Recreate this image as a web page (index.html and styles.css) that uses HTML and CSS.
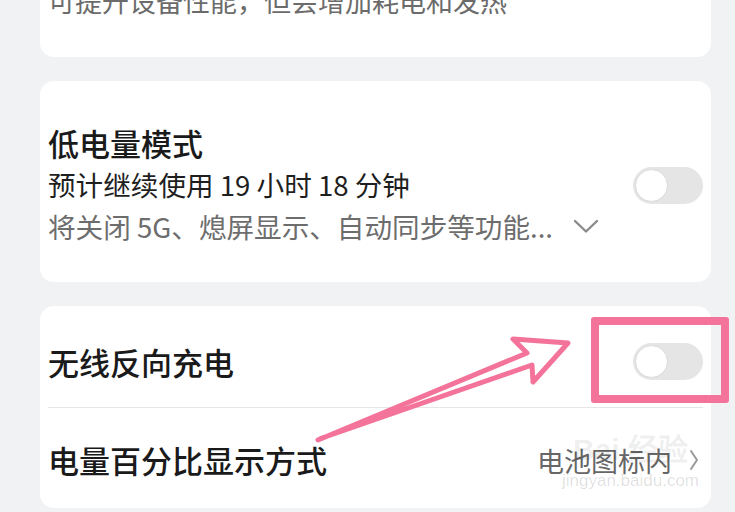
FILE: index.html
```html
<!DOCTYPE html>
<html lang="zh-CN">
<head>
  <meta charset="UTF-8">
  <title>电池</title>
  <link rel="stylesheet" href="styles.css">
</head>
<body>
  <div class="page">
    <div class="card card-top">
      <p class="desc">可提升设备性能，但会增加耗电和发热</p>
    </div>

    <div class="card card-mode">
      <div class="mode-text">
        <div class="title">低电量模式</div>
        <div class="sub">预计继续使用 19 小时 18 分钟</div>
        <div class="hint">
          将关闭 5G、熄屏显示、自动同步等功能...
          <svg class="chev-down" width="26" height="15" viewBox="0 0 26 15">
            <path d="M2 2 L13 12.5 L24 2" fill="none" stroke="#8a8a8a" stroke-width="2.4" stroke-linecap="round" stroke-linejoin="round"/>
          </svg>
        </div>
      </div>
      <span class="switch"><span class="knob"></span></span>
    </div>

    <div class="card card-list">
      <div class="row">
        <span class="title">无线反向充电</span>
        <span class="switch"><span class="knob"></span></span>
      </div>
      <div class="row row-line">
        <span class="title">电量百分比显示方式</span>
        <span class="value">电池图标内</span>
        <svg class="chev-right" width="10" height="22" viewBox="0 0 10 22">
          <path d="M2 2 L8 11 L2 20" fill="none" stroke="#9a9a9a" stroke-width="2" stroke-linecap="round" stroke-linejoin="round"/>
        </svg>
      </div>
    </div>

    <!-- annotation layer -->
    <div class="mark-box"></div>
    <svg class="arrow" width="735" height="512" viewBox="0 0 735 512">
      <polygon points="318,440 527,353 513,339 568,343 533,382 532,365 322,438"
               fill="none" stroke="#f4739a" stroke-width="5" stroke-linejoin="round"/>
    </svg>
    <div class="watermark">
      <span class="wm-logo">Bai 经验</span>
      <span class="wm-url">jingyan.baidu.com</span>
    </div>
  </div>
</body>
</html>
```

FILE: styles.css
```css
body {
  margin: 0;
  background-color: #f1f2f4;
  font-family: 'Noto Sans CJK SC', 'Noto Sans', sans-serif;
  color: #1a1a1a;
  overflow: hidden;
}

.page {
  position: relative;
  display: flex;
  flex-direction: column;
  gap: 24px;
  padding: 0 24px 0 40px;
  height: 512px;
}

.card {
  background-color: white;
  border-radius: 14px;
  padding: 0 8px;
}

.card-top {
  margin-top: -39px;
  padding-top: 20px;
  padding-bottom: 36px;
}

.desc {
  margin: 0;
  font-size: 27px;
  line-height: 40px;
  color: #6b6b6b;
}

.card-mode {
  display: flex;
  align-items: center;
  padding-top: 42px;
  padding-bottom: 35px;
}

.mode-text {
  flex: 1;
}

.title {
  font-size: 31px;
  line-height: 40px;
  font-weight: 500;
  color: #1a1a1a;
}

.sub {
  font-size: 27.6px;
  line-height: 42px;
  color: #1f1f1f;
}

.hint {
  display: flex;
  align-items: center;
  font-size: 27.6px;
  line-height: 42px;
  color: #6d6d6d;
}

.chev-down {
  margin-left: 20px;
}

.switch {
  position: relative;
  width: 70px;
  height: 37px;
  border-radius: 19px;
  background-color: #e5e5e5;
  flex-shrink: 0;
}

.knob {
  position: absolute;
  left: 2px;
  top: 2px;
  width: 31px;
  height: 31px;
  border-radius: 50%;
  background-color: white;
  border: 1px solid #d9d9d9;
}

.card-list {
  padding-top: 6px;
  padding-bottom: 0;
}

.row {
  display: flex;
  align-items: center;
  height: 95px;
  padding-top: 4px;
  box-sizing: border-box;
}

.row .title {
  flex: 1;
}

.row-line {
  height: 101px;
  border-top: 1px solid #e6e6e6;
}

.value {
  font-size: 27px;
  color: #666;
}

.chev-right {
  margin-left: 17px;
  margin-right: 4px;
}

.mark-box {
  position: absolute;
  left: 591px;
  top: 317px;
  width: 122px;
  height: 70px;
  border: 8px solid #f4739a;
  border-radius: 3px;
}

.arrow {
  position: absolute;
  left: 0;
  top: 0;
}

.watermark {
  position: absolute;
  left: 562px;
  top: 430px;
  display: flex;
  flex-direction: column;
  align-items: center;
  color: rgba(0, 0, 0, 0.13);
  font-family: 'Liberation Sans', sans-serif;
}

.wm-logo {
  font-size: 30px;
  line-height: 40px;
  font-weight: bold;
  color: rgba(0, 0, 0, 0.08);
}

.wm-url {
  font-size: 17px;
  line-height: 22px;
}
```
